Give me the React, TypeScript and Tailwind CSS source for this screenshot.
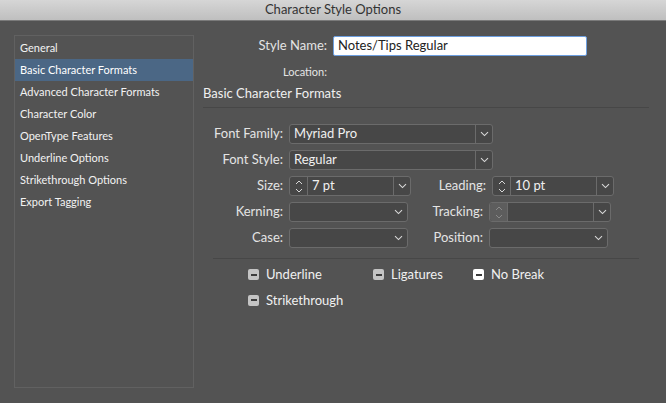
import React from 'react';

const font = { fontFamily: 'Lato, "Liberation Sans", sans-serif' };

const sections = [
  'General',
  'Basic Character Formats',
  'Advanced Character Formats',
  'Character Color',
  'OpenType Features',
  'Underline Options',
  'Strikethrough Options',
  'Export Tagging',
];

const Chevron = () => (
  <svg width="9" height="6" viewBox="0 0 9 6" className="shrink-0">
    <path d="M1 1.2 L4.5 4.6 L8 1.2" fill="none" stroke="#d8d8d8" strokeWidth="1.1" />
  </svg>
);

const Stepper = ({ dim }: { dim?: boolean }) => (
  <div
    className={`w-[18px] h-full flex flex-col items-center justify-center gap-[3px] border-r border-[#6b6b6b] ${
      dim ? 'bg-[#5d5d5d]' : ''
    }`}
  >
    <svg width="8" height="5" viewBox="0 0 8 5">
      <path d="M1 4 L4 1 L7 4" fill="none" stroke={dim ? '#8a8a8a' : '#d8d8d8'} strokeWidth="1" />
    </svg>
    <svg width="8" height="5" viewBox="0 0 8 5">
      <path d="M1 1 L4 4 L7 1" fill="none" stroke={dim ? '#8a8a8a' : '#d8d8d8'} strokeWidth="1" />
    </svg>
  </div>
);

interface ComboProps {
  width: string;
  value?: string;
  stepper?: boolean;
  dimStepper?: boolean;
  divider?: boolean;
}

const Combo = ({ width, value, stepper, dimStepper, divider }: ComboProps) => (
  <div className={`${width} h-[20px] flex items-stretch bg-[#474747] border border-[#6b6b6b] rounded-[3px] overflow-hidden`}>
    {stepper && <Stepper dim={dimStepper} />}
    <div className="flex-1 flex items-center pl-[4px] text-[13px] text-[#f0f0f0]">{value}</div>
    <div
      className={`w-[17px] flex items-center justify-center ${divider ? 'border-l border-[#6b6b6b]' : ''}`}
    >
      <Chevron />
    </div>
  </div>
);

const Label = ({ children, width }: { children: React.ReactNode; width: string }) => (
  <div className={`${width} shrink-0 text-right pr-[6px] text-[13px] text-[#e4e4e4]`}>{children}</div>
);

const Check = ({ label, white }: { label: string; white?: boolean }) => (
  <div className="flex items-center gap-[7px]">
    <div
      className={`w-[11px] h-[11px] rounded-[2px] flex items-center justify-center ${
        white ? 'bg-white' : 'bg-[#c4c4c4]'
      }`}
    >
      <div className="w-[6px] h-[2px] bg-[#3c3c3c]" />
    </div>
    <span className="text-[13px] text-[#f0f0f0]">{label}</span>
  </div>
);

export default function App() {
  return (
    <div className="w-[666px] h-[403px] bg-[#535353] flex flex-col overflow-hidden" style={font}>
      <div className="h-[21px] shrink-0 bg-gradient-to-b from-[#d6d6d6] to-[#bfbfbf] border-b border-[#7a7a7a] flex items-center justify-center">
        <span className="text-[13px] text-[#333333]">Character Style Options</span>
      </div>

      <div className="flex-1 flex pl-[14px] pt-[14px]">
        <div className="w-[180px] h-[353px] border border-[#616161] pt-[1px]">
          {sections.map((s, i) => (
            <div
              key={s}
              className={`h-[22px] flex items-center pl-[5px] text-[11px] ${
                i === 1 ? 'bg-[#4b6785] text-white' : 'text-[#f2f2f2]'
              }`}
            >
              {s}
            </div>
          ))}
        </div>

        <div className="flex-1 pl-[9px] pt-[1px]">
          <div className="flex items-center h-[20px]">
            <Label width="w-[130px]">Style Name:</Label>
            <div className="w-[254px] h-[20px] bg-white border border-[#6d9fe0] rounded-[2px] flex items-center pl-[4px] text-[13px] text-[#222222]">
              Notes/Tips Regular
            </div>
          </div>
          <div className="flex items-center h-[18px] mt-[7px]">
            <Label width="w-[130px]">
              <span className="text-[11px]">Location:</span>
            </Label>
          </div>
          <div className="h-[20px] flex items-center mt-[3px] text-[13px] text-[#f0f0f0]">Basic Character Formats</div>
          <div className="w-[446px] h-px bg-[#474747] mt-[3px]" />

          <div className="flex flex-col gap-[6px] mt-[16px]">
            <div className="flex items-center">
              <Label width="w-[86px]">Font Family:</Label>
              <Combo width="w-[204px]" value="Myriad Pro" divider />
            </div>
            <div className="flex items-center">
              <Label width="w-[86px]">Font Style:</Label>
              <Combo width="w-[204px]" value="Regular" divider />
            </div>
            <div className="flex items-center">
              <Label width="w-[86px]">Size:</Label>
              <Combo width="w-[122px]" value="7 pt" stepper divider />
              <Label width="w-[81px]">Leading:</Label>
              <Combo width="w-[122px]" value="10 pt" stepper divider />
            </div>
            <div className="flex items-center">
              <Label width="w-[86px]">Kerning:</Label>
              <Combo width="w-[119px]" />
              <Label width="w-[81px]">Tracking:</Label>
              <Combo width="w-[122px]" stepper dimStepper divider />
            </div>
            <div className="flex items-center">
              <Label width="w-[86px]">Case:</Label>
              <Combo width="w-[119px]" />
              <Label width="w-[81px]">Position:</Label>
              <Combo width="w-[119px]" />
            </div>
          </div>

          <div className="w-[426px] h-px bg-[#474747] ml-[10px] mt-[10px]" />

          <div className="ml-[45px] mt-[6px] flex flex-col gap-[6px]">
            <div className="flex items-center">
              <div className="w-[125px]">
                <Check label="Underline" />
              </div>
              <div className="w-[100px]">
                <Check label="Ligatures" />
              </div>
              <Check label="No Break" white />
            </div>
            <Check label="Strikethrough" />
          </div>
        </div>
      </div>
    </div>
  );
}
